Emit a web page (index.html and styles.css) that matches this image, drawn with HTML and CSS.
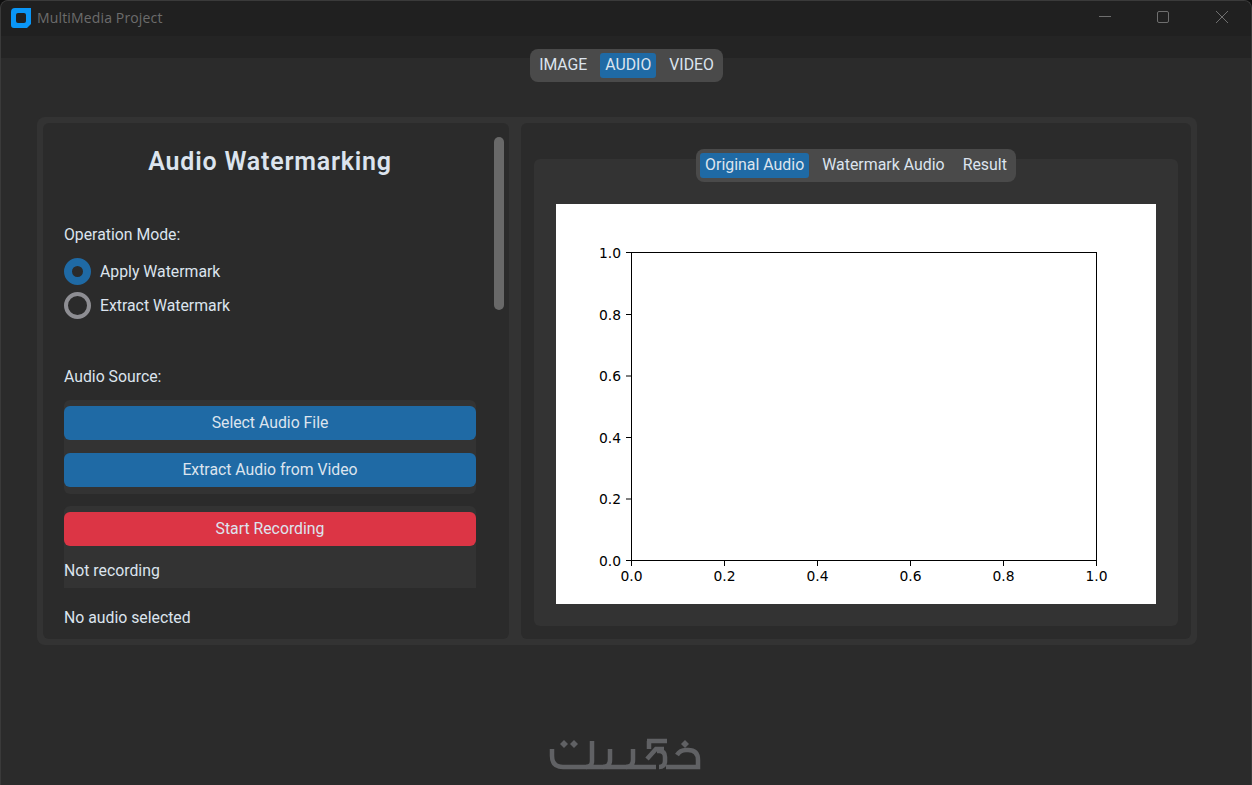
FILE: index.html
```html
<!DOCTYPE html>
<html lang="en">
<head>
<meta charset="utf-8">
<title>MultiMedia Project</title>
<link rel="stylesheet" href="styles.css">
</head>
<body>
<div class="window">
  <header class="titlebar">
    <svg class="app-icon" width="20" height="20" viewBox="0 0 20 20"><path fill="#0a96f6" fill-rule="evenodd" d="M4 0H20V16L16 20H3A3 3 0 0 1 0 17V4A4 4 0 0 1 4 0ZM7 5A2 2 0 0 0 5 7V13A2 2 0 0 0 7 15H13A2 2 0 0 0 15 13V7A2 2 0 0 0 13 5Z"/></svg>
    <span class="app-name">MultiMedia Project</span>
    <div class="win-controls">
      <svg width="12" height="12" viewBox="0 0 12 12"><path d="M0 5.500H12" stroke="#6f6f6f" fill="none"/></svg>
      <svg width="12" height="12" viewBox="0 0 12 12"><rect x=".5" y=".5" width="11" height="11" rx="1.500" stroke="#6f6f6f" fill="none"/></svg>
      <svg width="12" height="12" viewBox="0 0 12 12"><path d="M0 0L12 12M12 0L0 12" stroke="#6f6f6f" fill="none"/></svg>
    </div>
  </header>
  <main class="content">
    <nav class="seg seg-main">
      <span class="seg-item">IMAGE</span>
      <span class="seg-item is-active">AUDIO</span>
      <span class="seg-item">VIDEO</span>
    </nav>
    <div class="outer">
      <section class="panel panel-left">
        <div class="scroll-body">
          <h1 class="heading">Audio Watermarking</h1>
          <div class="label label-mode">Operation Mode:</div>
          <div class="radio-row"><span class="radio is-on"></span><span class="radio-text">Apply Watermark</span></div>
          <div class="radio-row"><span class="radio"></span><span class="radio-text">Extract Watermark</span></div>
          <div class="label label-source">Audio Source:</div>
          <div class="group group-files">
            <div class="btn">Select Audio File</div>
            <div class="btn">Extract Audio from Video</div>
          </div>
          <div class="group group-record">
            <div class="btn btn-red">Start Recording</div>
            <div class="status">Not recording</div>
          </div>
          <div class="label label-none">No audio selected</div>
        </div>
        <div class="scrollbar"></div>
      </section>
      <section class="panel panel-right">
        <div class="tab-frame">
          <nav class="seg seg-plot">
            <span class="seg-item is-active">Original Audio</span>
            <span class="seg-item">Watermark Audio</span>
            <span class="seg-item">Result</span>
          </nav>
          <svg class="plot" width="600" height="400" viewBox="0 0 600 400">
            <rect width="600" height="400" fill="#fff"/>
            <rect x="75.5" y="48.5" width="465" height="308" fill="none" stroke="#000"/>
            <path d="M75.5 357v5M168.500 357v5M261.500 357v5M354.500 357v5M447.500 357v5M540.500 357v5M75 356.500h-5M75 295h-5M75 233.500h-5M75 172h-5M75 110.500h-5M75 48.500h-5" stroke="#000" fill="none"/>
            <g class="tick-x">
              <text x="75.5" y="377">0.0</text><text x="168.5" y="377">0.2</text><text x="261.5" y="377">0.4</text><text x="354.5" y="377">0.6</text><text x="447.5" y="377">0.8</text><text x="540.5" y="377">1.0</text>
            </g>
            <g class="tick-y">
              <text x="65" y="361.5">0.0</text><text x="65" y="300">0.2</text><text x="65" y="238.5">0.4</text><text x="65" y="177">0.6</text><text x="65" y="115.5">0.8</text><text x="65" y="54">1.0</text>
            </g>
          </svg>
        </div>
      </section>
    </div>
    <svg class="logo" width="190" height="65" viewBox="0 0 190 65">
      <g fill="none" stroke="#606164" stroke-width="4.500">
        <path d="M22 29V36Q22 47 33 47H126"/>
        <path d="M62 21V41Q62 47 56 47M80 29V40Q80 47 73 47M103 29V40Q103 47 96 47"/>
        <path d="M117 21H137M119 21V29M134 29H126L117 39"/>
        <path d="M127 31H129Q135 31 135 37V41Q135 47 129 47"/>
        <path d="M147 35Q150 30 156 30H158Q168 30 168 40V47H136"/>
      </g>
      <g fill="#606164">
        <path d="M30 24l4-4l4 4l-4 4ZM40 24l4-4l4 4l-4 4ZM151 24l4-4l4 4l-4 4Z"/>
      </g>
    </svg>
  </main>
</div>
</body>
</html>
```
FILE: styles.css
```css
* { box-sizing: border-box; }
html, body { margin: 0; height: 100%; background: #0f0f0f; overflow: hidden; }
body { font-family: Roboto, "Liberation Sans", sans-serif; font-size: 15.8px; color: #dce4ee; }

.window {
  width: 1252px;
  height: 785px;
  display: flex;
  flex-direction: column;
  background: #2b2b2b;
  border: 1px solid #3a3a3a;
  border-bottom: 0;
  border-radius: 8px 8px 0 0;
  overflow: hidden;
}

.titlebar {
  height: 36px;
  flex: none;
  display: flex;
  align-items: center;
  margin-top: -1px;
  padding: 0 0 0 10px;
  background: #202020;
}
.app-icon { flex: none; margin-top: -1px; }
.app-name {
  margin-left: 6px;
  margin-top: -1px;
  font-family: "Open Sans", sans-serif;
  font-size: 14px;
  letter-spacing: .15px;
  color: #6c6c6c;
}
.win-controls {
  margin-left: auto;
  display: flex;
  gap: 46px;
  padding-right: 23px;
  margin-top: -3px;
}
.win-controls svg:last-child { margin-left: 1px; }

.content {
  flex: 1;
  display: flex;
  flex-direction: column;
  align-items: center;
  background: linear-gradient(#242424 22px, #2b2b2b 22px);
}

.seg {
  display: flex;
  gap: 8px;
  padding: 4px;
  height: 33px;
  border-radius: 8px;
  background: #4a4a4a;
  line-height: 23px;
}
.seg-item { padding: 0 5px; border-radius: 3px; height: 25px; white-space: nowrap; }
.seg-item.is-active { background: #1f6aa5; }
.seg-main { margin-top: 13px; margin-left: 1px; }
.seg-plot { align-self: center; margin-top: -10px; font-size: 15.9px; }

.outer {
  align-self: flex-start;
  margin: 35px 0 0 36px;
  width: 1160px;
  height: 528px;
  padding: 6px;
  display: flex;
  gap: 12px;
  background: #333333;
  border-radius: 8px;
}
.panel { background: #2b2b2b; border-radius: 6px; height: 516px; overflow: hidden; }
.panel-left { width: 466px; display: flex; position: relative; }
.panel-right { width: 670px; padding: 36px 13px 0; }

.scroll-body { width: 433px; padding-left: 21px; flex: none; }
.heading {
  margin: 23px 0 0;
  width: 412px;
  font-size: 25px;
  line-height: 32px;
  font-weight: 600;
  text-align: center;
  letter-spacing: .8px;
}
.label { line-height: 20px; }
.label-mode { margin-top: 47px; }
.radio-row { display: flex; align-items: center; gap: 9px; height: 27px; line-height: 27px; }
.label-mode + .radio-row { margin-top: 13px; }
.radio-row + .radio-row { margin-top: 7px; }
.radio { width: 27px; height: 27px; border-radius: 50%; border: 4px solid #8e8e93; flex: none; }
.radio.is-on { border: 8px solid #1f6aa5; background: #2b2b2b; }
.label-source { margin-top: 48px; }

.group { width: 412px; background: #333333; }
.group-files { margin-top: 13px; height: 94px; padding-top: 6px; border-radius: 6px; display: flex; flex-direction: column; gap: 13px; }
.group-record { margin-top: 12px; height: 82px; padding-top: 6px; border-radius: 6px 6px 0 0; }
.btn {
  height: 34px;
  line-height: 33px;
  text-align: center;
  background: #1f6aa5;
  border-radius: 6px;
}
.btn-red { background: #dc3545; }
.status { margin-top: 15px; line-height: 20px; }
.label-none { margin-top: 20px; }

.scrollbar {
  position: absolute;
  left: 451px;
  top: 14px;
  width: 10px;
  height: 173px;
  border-radius: 5px;
  background: #696969;
}

.tab-frame {
  height: 467px;
  background: #333333;
  border-radius: 6px;
  display: flex;
  flex-direction: column;
  align-items: center;
}
.plot { display: block; margin-top: 22px; flex: none; }
.plot text { font-family: "DejaVu Sans", sans-serif; font-size: 13.89px; fill: #000; }
.tick-x text { text-anchor: middle; }
.tick-y text { text-anchor: end; }

.logo { display: block; margin-top: 75px; margin-left: -2px; flex: none; }
```
